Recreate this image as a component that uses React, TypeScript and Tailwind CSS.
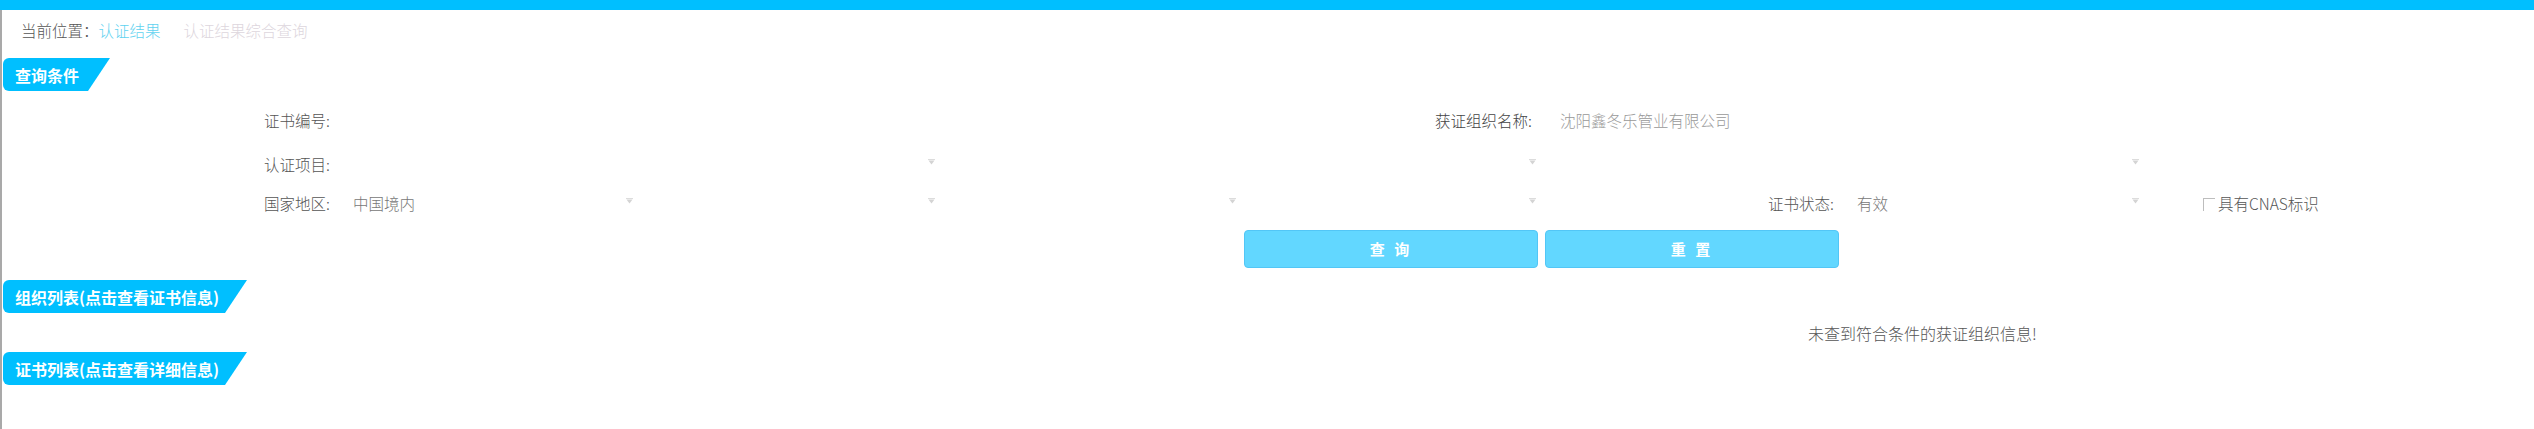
import React from "react";

const Arrow = () => (
  <svg width="7" height="6" viewBox="0 0 7 6" className="block">
    <path d="M0 0h7v1H0z" fill="#dcdcdc" />
    <path d="M0.5 1.5h6L3.5 5.5z" fill="#d4d4d4" />
  </svg>
);

function Select({
  className,
  text,
  textClass,
}: {
  className: string;
  text?: string;
  textClass?: string;
}) {
  return (
    <div className={`flex h-full items-center justify-between pr-[4px] ${className}`}>
      <span className={textClass}>{text ?? ""}</span>
      <span className="-mt-[6px]">
        <Arrow />
      </span>
    </div>
  );
}

function Header({ className, children }: { className: string; children: React.ReactNode }) {
  return (
    <div
      className={`ml-[1px] flex h-[33px] items-center rounded-l-[6px] bg-[#00bfff] pl-[12px] text-[16px] font-bold leading-none text-white [clip-path:polygon(0_0,100%_0,calc(100%_-_22px)_100%,0_100%)] ${className}`}
    >
      {children}
    </div>
  );
}

export default function App() {
  return (
    <div className="flex min-h-[429px] w-full flex-col bg-white font-['Noto_Sans_CJK_SC','Noto_Sans',sans-serif] text-[15.5px] font-light">
      <div className="h-[10px] w-full bg-[#00bfff]" />
      <div className="flex flex-1 flex-col border-l-2 border-[#a9a9a9]">
        {/* breadcrumb */}
        <div className="mt-[10px] flex h-[20px] items-center pl-[19px] leading-[20px]">
          <span className="text-[#555]">当前位置：</span>
          <span className="text-[#5fd2f0]">认证结果</span>
          <span className="ml-[23px] text-[#ddd6dd]">认证结果综合查询</span>
        </div>

        <div className="mt-[18px]">
          <Header className="w-[107px]">查询条件</Header>
        </div>

        {/* Row 1 */}
        <div className="mt-[15px] flex h-[30px] items-center pl-[262px]">
          <div className="w-[76px] text-[#555]">证书编号:</div>
          <div className="h-full w-[1095px]" />
          <div className="w-[110px] text-[#444]">获证组织名称:</div>
          <div className="w-[400px] pl-[15px] text-[#999]">沈阳鑫冬乐管业有限公司</div>
        </div>

        {/* Row 2 */}
        <div className="mt-[14px] flex h-[30px] items-center pl-[262px]">
          <div className="w-[76px] text-[#555]">认证项目:</div>
          <Select className="w-[599px]" />
          <Select className="w-[601px]" />
          <Select className="w-[603px]" />
        </div>

        {/* Row 3 */}
        <div className="mt-[9px] flex h-[30px] items-center pl-[262px]">
          <div className="w-[76px] text-[#555]">国家地区:</div>
          <Select className="w-[297px] pl-[13px]" text="中国境内" textClass="text-[#777]" />
          <Select className="w-[302px]" />
          <Select className="w-[301px]" />
          <Select className="w-[300px]" />
          <div className="w-[228px]" />
          <div className="w-[77px] text-[#555]">证书状态:</div>
          <Select className="w-[298px] pl-[12px]" text="有效" textClass="text-[#777]" />
          <div className="ml-[60px] h-[13px] w-[12px] border-l border-t border-[#bdbdbd]" />
          <span className="ml-[3px] text-[#555]">具有CNAS标识</span>
        </div>

        {/* Buttons */}
        <div className="mt-[11px] flex gap-[7px] pl-[1242px]">
          <button className="flex h-[38px] w-[294px] items-center justify-center rounded-[4px] border border-[#52c6f6] bg-[#62d7ff] text-[15px] font-bold tracking-[3px] text-white">
            查 询
          </button>
          <button className="flex h-[38px] w-[294px] items-center justify-center rounded-[4px] border border-[#52c6f6] bg-[#62d7ff] text-[15px] font-bold tracking-[3px] text-white">
            重 置
          </button>
        </div>

        <div className="mt-[12px]">
          <Header className="w-[244px]">组织列表(点击查看证书信息)</Header>
        </div>

        <div className="mt-[10px] flex h-[20px] items-center pl-[1806px] text-[16px] leading-[20px] text-[#555]">
          未查到符合条件的获证组织信息!
        </div>

        <div className="mt-[9px]">
          <Header className="w-[244px]">证书列表(点击查看详细信息)</Header>
        </div>
      </div>
    </div>
  );
}
